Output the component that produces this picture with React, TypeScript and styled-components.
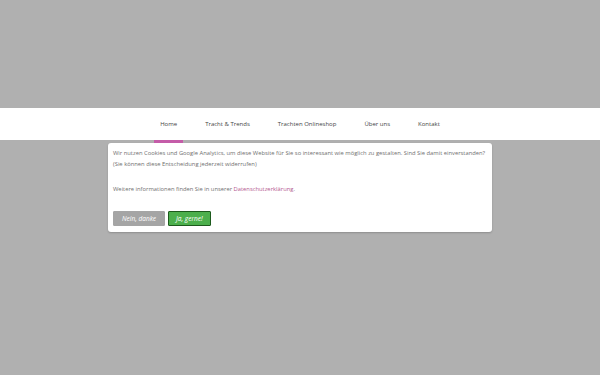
import styled, { createGlobalStyle } from 'styled-components'

const GlobalStyle = createGlobalStyle`
  html, body {
    margin: 0;
    padding: 0;
    background: #b0b0b0;
    font-family: 'Open Sans', 'Liberation Sans', sans-serif;
  }
`

const Page = styled.div`
  width: 600px;
  height: 375px;
  background: #b0b0b0;
  padding-top: 108px;
  box-sizing: border-box;
`

const NavBar = styled.nav`
  height: 32px;
  background: #fff;
  display: flex;
  justify-content: center;
  align-items: stretch;
  gap: 16px;
`

const NavItem = styled.div<{ active?: boolean }>`
  position: relative;
  display: flex;
  align-items: center;
  padding: 0 6px;
  font-size: 6px;
  color: #444;
  white-space: nowrap;

  &::after {
    content: '';
    display: ${(p) => (p.active ? 'block' : 'none')};
    position: absolute;
    left: 0;
    right: 0;
    bottom: -3px;
    height: 3px;
    background: #c45ca8;
  }
`

const Dialog = styled.div`
  width: 384px;
  margin: 3px 0 0 108px;
  background: #fff;
  border-radius: 3px;
  box-shadow: 0 1px 2px rgba(0, 0, 0, 0.2);
  padding: 5px 4px 6px 5px;
  box-sizing: border-box;
  color: #707070;
  font-size: 5.82px;
  line-height: 11px;
`

const Para = styled.p<{ last?: boolean }>`
  margin: 0 0 ${(p) => (p.last ? '0' : '14px')};
`

const Line = styled.span`
  display: block;
  white-space: nowrap;
`

const Link = styled.span`
  color: #b4588f;
`

const Buttons = styled.div`
  display: flex;
  gap: 3px;
  margin-top: 16px;
`

const Button = styled.button<{ primary?: boolean }>`
  height: 15px;
  padding: 0 ${(p) => (p.primary ? '7px' : '8px')};
  border: 1px solid ${(p) => (p.primary ? '#1d5a1d' : '#a5a5a5')};
  background: ${(p) => (p.primary ? '#4caf4c' : '#a5a5a5')};
  color: #fff;
  font-family: 'Open Sans', 'Liberation Sans', sans-serif;
  font-style: italic;
  font-size: 6.5px;
  border-radius: 1px;
  cursor: pointer;
`

export default function App() {
  return (
    <>
      <GlobalStyle />
      <Page>
        <NavBar>
          <NavItem active>Home</NavItem>
          <NavItem>Tracht &amp; Trends</NavItem>
          <NavItem>Trachten Onlineshop</NavItem>
          <NavItem>Über uns</NavItem>
          <NavItem>Kontakt</NavItem>
        </NavBar>
        <Dialog>
          <Para>
            <Line>
              Wir nutzen Cookies und Google Analytics, um diese Website für Sie so interessant wie möglich zu
              gestalten. Sind Sie damit einverstanden?
            </Line>
            <Line>(Sie können diese Entscheidung jederzeit widerrufen)</Line>
          </Para>
          <Para last>
            Weitere informationen finden Sie in unserer <Link>Datenschutzerklärung</Link>.
          </Para>
          <Buttons>
            <Button>Nein, danke</Button>
            <Button primary>Ja, gerne!</Button>
          </Buttons>
        </Dialog>
      </Page>
    </>
  )
}
